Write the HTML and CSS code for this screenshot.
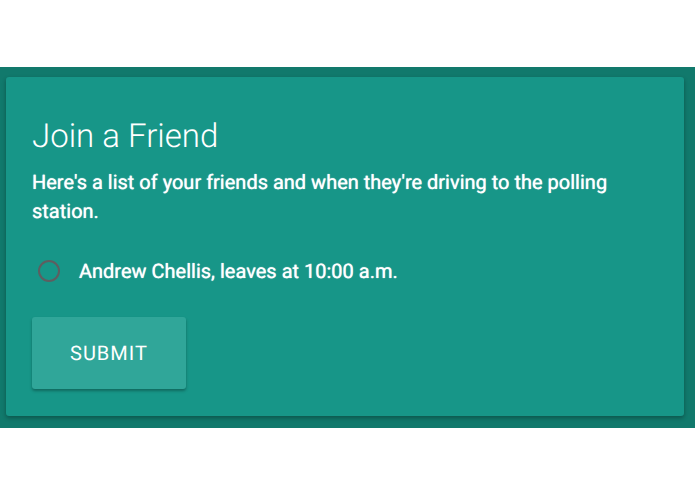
FILE: index.html
```html
<!DOCTYPE html>
<html lang="en">
  <head>
    <meta charset="UTF-8" />
    <meta name="viewport" content="width=device-width, initial-scale=1.0" />
    <title>Join a Friend</title>
    <link rel="stylesheet" href="styles.css">
  </head>
  <body>
    <main class="page">
      <section class="card">
        <h1 class="card-title">Join a Friend</h1>
        <p class="card-text">Here's a list of your friends and when they're driving to the polling station.</p>
        <form class="ride-form">
          <div class="ride">
            <input type="radio" name="ride" id="ride1" value="1" />
            <label for="ride1">Andrew Chellis, leaves at 10:00 a.m.</label>
          </div>
          <button type="submit" class="submit-btn">SUBMIT</button>
        </form>
      </section>
    </main>
  </body>
</html>
```
FILE: styles.css
```css
* {
  box-sizing: border-box;
  margin: 0;
  padding: 0;
}
body {
  padding: 67px 0;
  background: #fff;
  color: #fff;
  font-family: Roboto, sans-serif;
  text-rendering: geometricPrecision;
}
.page {
  padding: 10px 11px 12px 6px;
  background: #11796c;
}
.card {
  padding: 41px 26px 27px;
  border-radius: 3px;
  background: #179688;
  box-shadow: 0 2px 4px rgba(0, 0, 0, 0.3);
}
.card-title {
  margin-bottom: 13px;
  font-size: 33px;
  font-weight: 300;
  line-height: 37px;
}
.card-text {
  font-size: 20px;
  line-height: 29px;
  text-shadow: 0 0 1px #fff;
}
.ride {
  display: flex;
  align-items: center;
  gap: 19px;
  margin: 31px 0 32px;
  padding-left: 6px;
  font-size: 20px;
  line-height: 28px;
  text-shadow: 0 0 1px #fff;
}
.ride input {
  appearance: none;
  width: 22px;
  height: 22px;
  border: 2px solid #5e5e60;
  border-radius: 50%;
}
.ride input:checked {
  background: #fff;
}
.submit-btn {
  height: 72px;
  padding: 0 38px;
  border: none;
  border-radius: 3px;
  background: #30a699;
  box-shadow: 0 2px 3px rgba(0, 0, 0, 0.3);
  color: #fff;
  font-family: inherit;
  font-size: 20px;
  letter-spacing: 1px;
  text-rendering: inherit;
  cursor: pointer;
}
```
